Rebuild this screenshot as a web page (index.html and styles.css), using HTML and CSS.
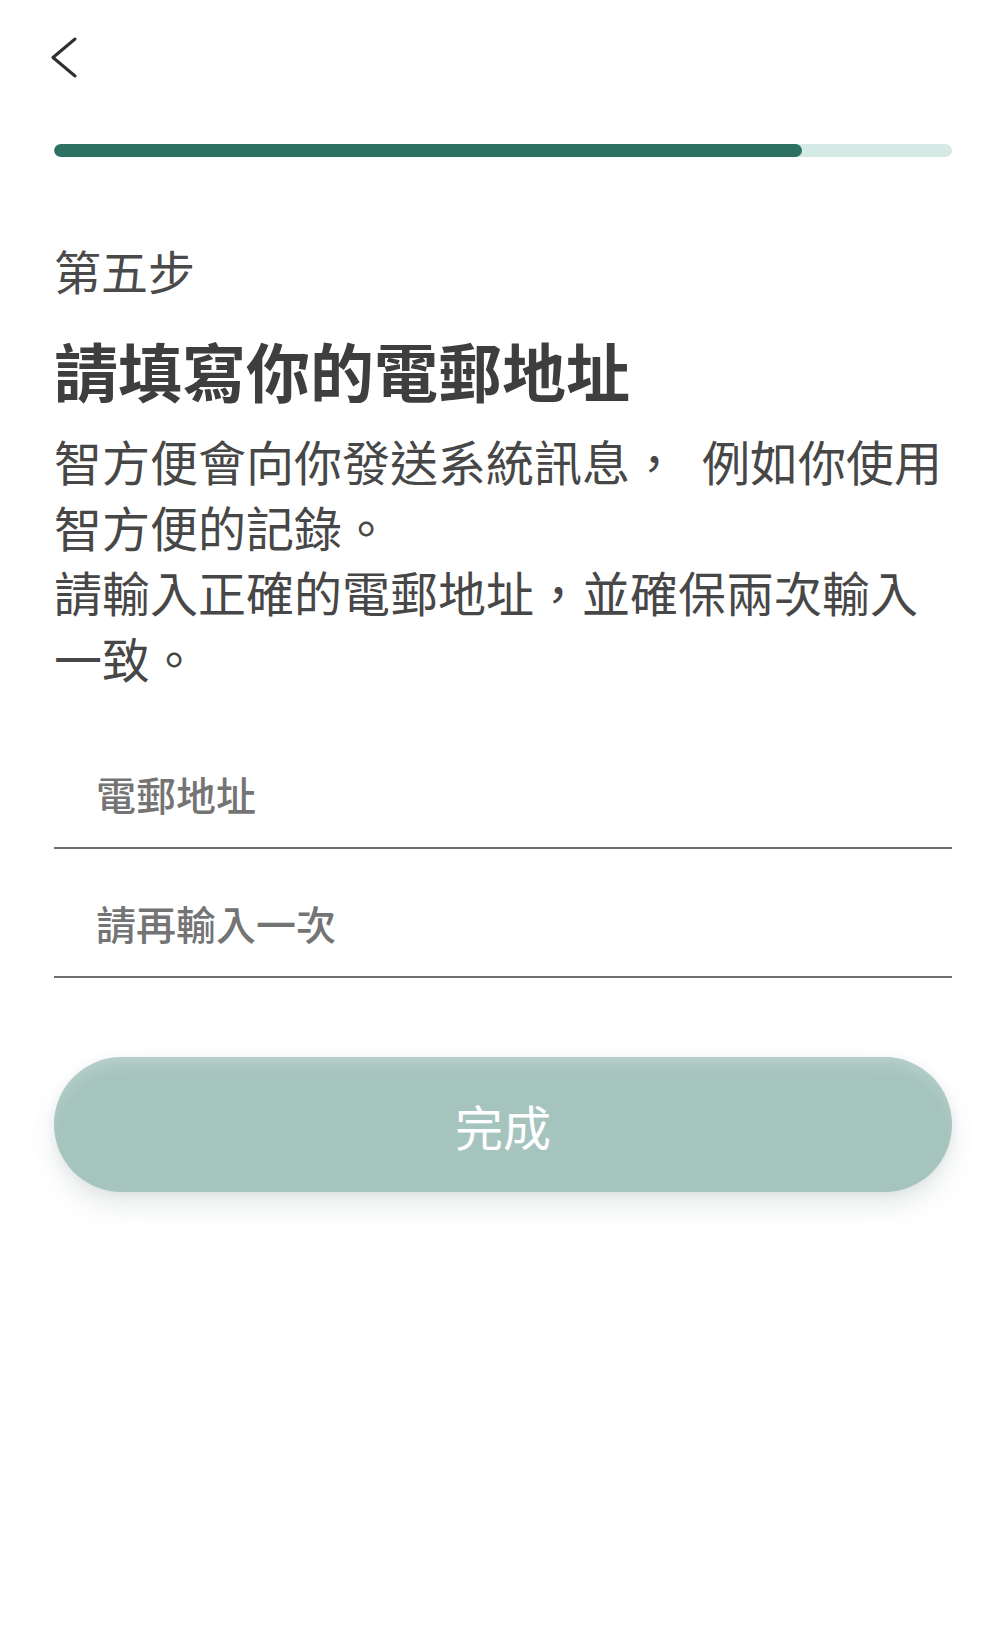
FILE: index.html
```html
<!DOCTYPE html>
<html lang="zh-Hant">
<head>
<meta charset="utf-8">
<title>第五步</title>
<link rel="stylesheet" href="styles.css">
</head>
<body>
<main class="page">
  <button class="back" type="button" aria-label="返回">
    <svg class="back-icon" viewBox="0 0 27 43" width="27" height="43">
      <polyline points="24,3 2,21.5 24,40" />
    </svg>
  </button>

  <div class="progress"><div class="progress-fill" style="width: 83.3%"></div></div>

  <p class="step">第五步</p>
  <h1 class="title">請填寫你的電郵地址</h1>
  <p class="desc">智方便會向你發送系統訊息，&#8194;例如你使用智方便的記錄。<br>請輸入正確的電郵地址，並確保兩次輸入一致。</p>

  <form class="form">
    <input class="field" type="email" placeholder="電郵地址">
    <input class="field" type="email" placeholder="請再輸入一次">
    <button class="submit" type="button">完成</button>
  </form>
</main>
</body>
</html>
```

FILE: styles.css
```css
html, body {
  margin: 0;
  padding: 0;
  background: #ffffff;
}

body {
  font-family: "Noto Sans CJK TC", "Noto Sans CJK SC", "Noto Sans", sans-serif;
  color: #444444;
}

.page {
  width: 1000px;
  min-height: 1636px;
  box-sizing: border-box;
  padding: 0 48px 0 54px;
  display: flex;
  flex-direction: column;
}

.back {
  align-self: flex-start;
  margin: 36px 0 0 -3px;
  padding: 0;
  border: none;
  background: none;
  width: 27px;
  height: 43px;
  cursor: pointer;
}

.back-icon {
  display: block;
  fill: none;
  stroke: #2f2f2f;
  stroke-width: 3;
  stroke-linecap: round;
  stroke-linejoin: round;
}

.progress {
  margin-top: 65px;
  height: 13px;
  border-radius: 7px;
  background: #d5eae5;
  overflow: hidden;
}

.progress-fill {
  height: 100%;
  border-radius: 7px;
  background: #2d7163;
}

.step {
  margin: 89px 0 0;
  font-size: 47px;
  line-height: 47px;
  font-weight: 400;
  color: #4a4a4a;
}

.title {
  margin: 44px 0 0;
  font-size: 64px;
  line-height: 64px;
  font-weight: 700;
  color: #3e3e3e;
}

.desc {
  margin: 27px 0 0;
  font-size: 48px;
  line-height: 65.5px;
  font-weight: 400;
  color: #474747;
}

.form {
  margin-top: 30px;
  display: flex;
  flex-direction: column;
}

.field {
  display: block;
  width: 100%;
  box-sizing: border-box;
  margin: 0;
  padding: 54px 0 33px 42px;
  height: 129px;
  border: none;
  border-bottom: 2px solid #6e6e6e;
  background: transparent;
  font-family: inherit;
  font-size: 40px;
  line-height: 40px;
  font-weight: 500;
  color: #444444;
  outline: none;
}

.field::placeholder {
  color: #747474;
  opacity: 1;
}

.submit {
  margin-top: 79px;
  height: 135px;
  width: 100%;
  border: none;
  border-radius: 68px;
  background: #a6c4be;
  box-shadow: 0 14px 26px rgba(60, 90, 85, 0.12),
              0 2px 10px rgba(60, 90, 85, 0.08),
              inset 0 14px 16px -8px rgba(255, 255, 255, 0.22);
  font-family: inherit;
  font-size: 48px;
  line-height: 48px;
  font-weight: 400;
  color: #ffffff;
  cursor: pointer;
}
```
